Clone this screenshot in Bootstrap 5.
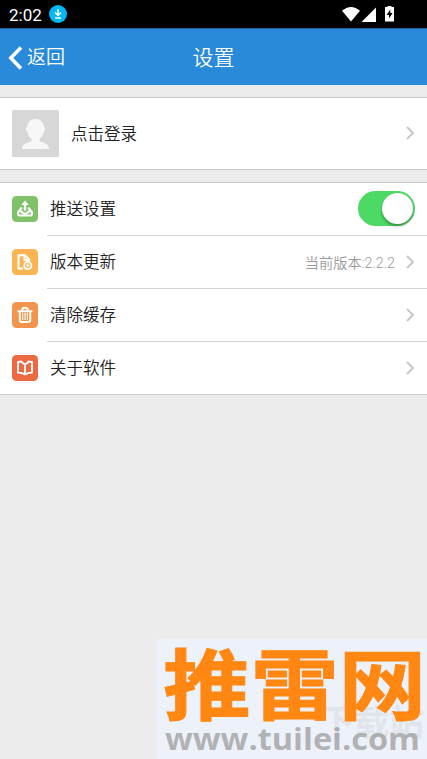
<!DOCTYPE html>
<html lang="zh-CN">
<head>
<meta charset="utf-8">
<meta name="viewport" content="width=device-width, initial-scale=1">
<title>设置</title>
<link href="https://cdn.jsdelivr.net/npm/bootstrap@5.3.0/dist/css/bootstrap.min.css" rel="stylesheet">
<style>
body{background:#ececec;font-family:Roboto,"Noto Sans CJK SC",sans-serif;color:#222;height:759px;overflow:hidden}
svg{display:block;flex:none}
.statusbar{height:28px;background:#000;color:#fff;font-size:17px;font-weight:400;line-height:26px;padding:0 30px 0 9px}
.clock{padding-top:2px;margin-right:7px}
.titlebar{height:57px;background:#288ad8;border-top:1px solid #1c5f96;color:#fff;display:grid;grid-template-columns:1fr auto 1fr}
.back-link{font-size:19px;padding-left:8px;gap:4px;font-weight:350}
.back-link span{padding-top:2px}
.page-title{font-size:21px;font-weight:350;line-height:56px;padding-top:1px}
.panel{background:#fff;border-top:1px solid #c8c8c8;border-bottom:1px solid #c8c8c8;margin-top:12px;font-size:16.5px;line-height:24px;font-weight:350}
.profile{height:71px;padding:0 12px}
.avatar{margin-right:12px}
.profile span,.setting-body span{padding-top:2px}
.setting{height:53px;padding-left:12px}
.setting>svg{margin-bottom:1px}
.chevron{margin-bottom:1px}
.setting-body{margin-left:9px;padding:0 12px 0 3px;height:53px;border-bottom:1px solid #d3d3d3}
.setting:last-child,.setting:last-child .setting-body{height:52px;border-bottom:0}
.setting-body .version{font-size:14.2px;color:#999;margin-right:10px;padding-top:1px}
.toggle{width:57px;height:35px;border-radius:18px;background:#4cd964;padding:2px;margin-bottom:1px}
.knob{width:31px;height:31px;border-radius:50%;background:#fff;box-shadow:0 2px 3px rgba(0,0,0,.35)}
.brand{right:0;bottom:0}
</style>
<script src="https://cdn.jsdelivr.net/npm/bootstrap@5.3.0/dist/js/bootstrap.bundle.min.js"></script>
</head>
<body>
<div class="statusbar d-flex align-items-center justify-content-between">
  <div class="d-flex align-items-center"><span class="clock">2:02</span>
    <svg width="18" height="18" viewBox="0 0 18 18"><circle cx="9" cy="9" r="9" fill="#00b8f8"/><path d="M9 4v6M6 7.500l3 3 3-3M6 13h6" fill="none" stroke="#fff" stroke-width="1.500"/></svg>
  </div>
  <svg width="56" height="18" viewBox="0 0 56 18"><g fill="#fff"><path d="M1 5.800Q10 -1.800 19 5.800L10 16.500Z"/><path d="M35 2.500v14.500H20.500z"/><path d="M44 2h2.500V1h4v1H53v14.500h-9z"/></g><path d="M49.300 4.500L45.600 10h2.400v3.500l3.600-5.500h-2.300z" fill="#000"/></svg>
</div>
<header class="titlebar">
  <div class="back-link d-flex align-items-center">
    <svg width="15" height="24" viewBox="0 0 15 24"><path d="M13 1.500L2.800 12 13 22.500" fill="none" stroke="#fff" stroke-width="3.600"/></svg><span>返回</span>
  </div>
  <div class="page-title">设置</div>
</header>
<main>
  <section class="panel">
    <div class="profile d-flex align-items-center">
      <svg class="avatar" width="47" height="47" viewBox="0 0 47 47"><rect width="47" height="47" rx="1.500" fill="#d7d7d7"/><path d="M23.500 9c5 0 8 3 8.300 8 1.700 0 1.600 4-.3 5-.5 3.500-2 5.500-4 7v2c3 2 9.500 2 9.500 8H10c0-6 6.500-6 9.500-8v-2c-2-1.500-3.500-3.500-4-7-1.900-1-2-5-.3-5 .3-5 3.300-8 8.300-8z" fill="#f7f7f7"/></svg>
      <span>点击登录</span>
      <svg class="chevron ms-auto" width="10" height="14" viewBox="0 0 10 14"><path d="M2 1l6 6-6 6" fill="none" stroke="#c7c7cc" stroke-width="2"/></svg>
    </div>
  </section>
  <section class="panel">
    <div class="setting d-flex align-items-center">
      <svg width="26" height="26" viewBox="0 0 26 26"><rect width="26" height="26" rx="4.500" fill="#80c269"/><path d="M13 14.500V8" fill="none" stroke="#fff" stroke-width="2.400"/><path d="M13 4.500L16.800 9H9.200z" fill="#fff"/><path d="M9.800 11.500L6 16v1.700q0 1.800 2 1.800h10q2 0 2-1.800V16l-3.800-4.500M6.500 15.500h3.200q.5 2 3.300 2t3.300-2h3.200" fill="none" stroke="#fff" stroke-width="2"/></svg>
      <div class="setting-body flex-grow-1 d-flex align-items-center"><span>推送设置</span>
        <div class="toggle ms-auto d-flex justify-content-end" role="switch" aria-checked="true"><div class="knob"></div></div>
      </div>
    </div>
    <div class="setting d-flex align-items-center">
      <svg width="26" height="26" viewBox="0 0 26 26"><rect width="26" height="26" rx="4.500" fill="#fab552"/><path d="M11 19.500H6.500V6.200H13l4.200 4.300V12M12.500 6.500V11H17" fill="none" stroke="#fff" stroke-width="2"/><circle cx="15.800" cy="16.500" r="3.600" fill="none" stroke="#fff" stroke-width="1.700"/><path d="M15.800 14.700v3.600M14 16.500h3.600" stroke="#fff" stroke-width="1.300"/></svg>
      <div class="setting-body flex-grow-1 d-flex align-items-center"><span>版本更新</span><span class="version ms-auto">当前版本:2.2.2</span>
        <svg class="chevron" width="10" height="14" viewBox="0 0 10 14"><path d="M2 1l6 6-6 6" fill="none" stroke="#c7c7cc" stroke-width="2"/></svg>
      </div>
    </div>
    <div class="setting d-flex align-items-center">
      <svg width="26" height="26" viewBox="0 0 26 26"><rect width="26" height="26" rx="4.500" fill="#f3944d"/><path d="M5.500 9.200h15M10 8.500q0-2.700 3-2.700t3 2.700M7.800 10v8q0 2 2 2h6.400q2 0 2-2v-8" fill="none" stroke="#fff" stroke-width="2"/><path d="M10.700 11v7M13 11v7M15.300 11v7" stroke="#fff" stroke-width="1.100"/></svg>
      <div class="setting-body flex-grow-1 d-flex align-items-center"><span>清除缓存</span>
        <svg class="chevron ms-auto" width="10" height="14" viewBox="0 0 10 14"><path d="M2 1l6 6-6 6" fill="none" stroke="#c7c7cc" stroke-width="2"/></svg>
      </div>
    </div>
    <div class="setting d-flex align-items-center">
      <svg width="26" height="26" viewBox="0 0 26 26"><rect width="26" height="26" rx="4.500" fill="#ed6941"/><path d="M13 9.200Q10.500 8.500 9.500 6.500L6 6.800v10.900q4.500 0 7 1.700 2.500-1.700 7-1.700V6.800l-3.500-.3Q15.500 8.500 13 9.200v10" fill="none" stroke="#fff" stroke-width="1.800" stroke-linejoin="round"/></svg>
      <div class="setting-body flex-grow-1 d-flex align-items-center"><span>关于软件</span>
        <svg class="chevron ms-auto" width="10" height="14" viewBox="0 0 10 14"><path d="M2 1l6 6-6 6" fill="none" stroke="#c7c7cc" stroke-width="2"/></svg>
      </div>
    </div>
  </section>
</main>
<svg class="brand position-absolute" width="270" height="120" viewBox="0 0 270 120">
  <rect width="270" height="120" fill="#edf2fa"/>
  <text x="163" y="96" font-family="Noto Sans CJK SC" font-weight="700" font-size="35" textLength="104" fill="#e1e5eb">下载站</text>
  <g transform="translate(6 74.5) scale(1.02 .9)"><text y="0" font-family="Noto Sans CJK SC" font-weight="700" font-size="86" fill="#ff8712" stroke="#ff8712" stroke-width="1">推雷网</text></g>
  <g transform="translate(8 111) scale(1 .93)"><text font-family="Open Sans" font-weight="700" font-size="32" textLength="255" lengthAdjust="spacingAndGlyphs" fill="#999" fill-opacity=".72">www.tuilei.com</text></g>
</svg>
</body>
</html>
